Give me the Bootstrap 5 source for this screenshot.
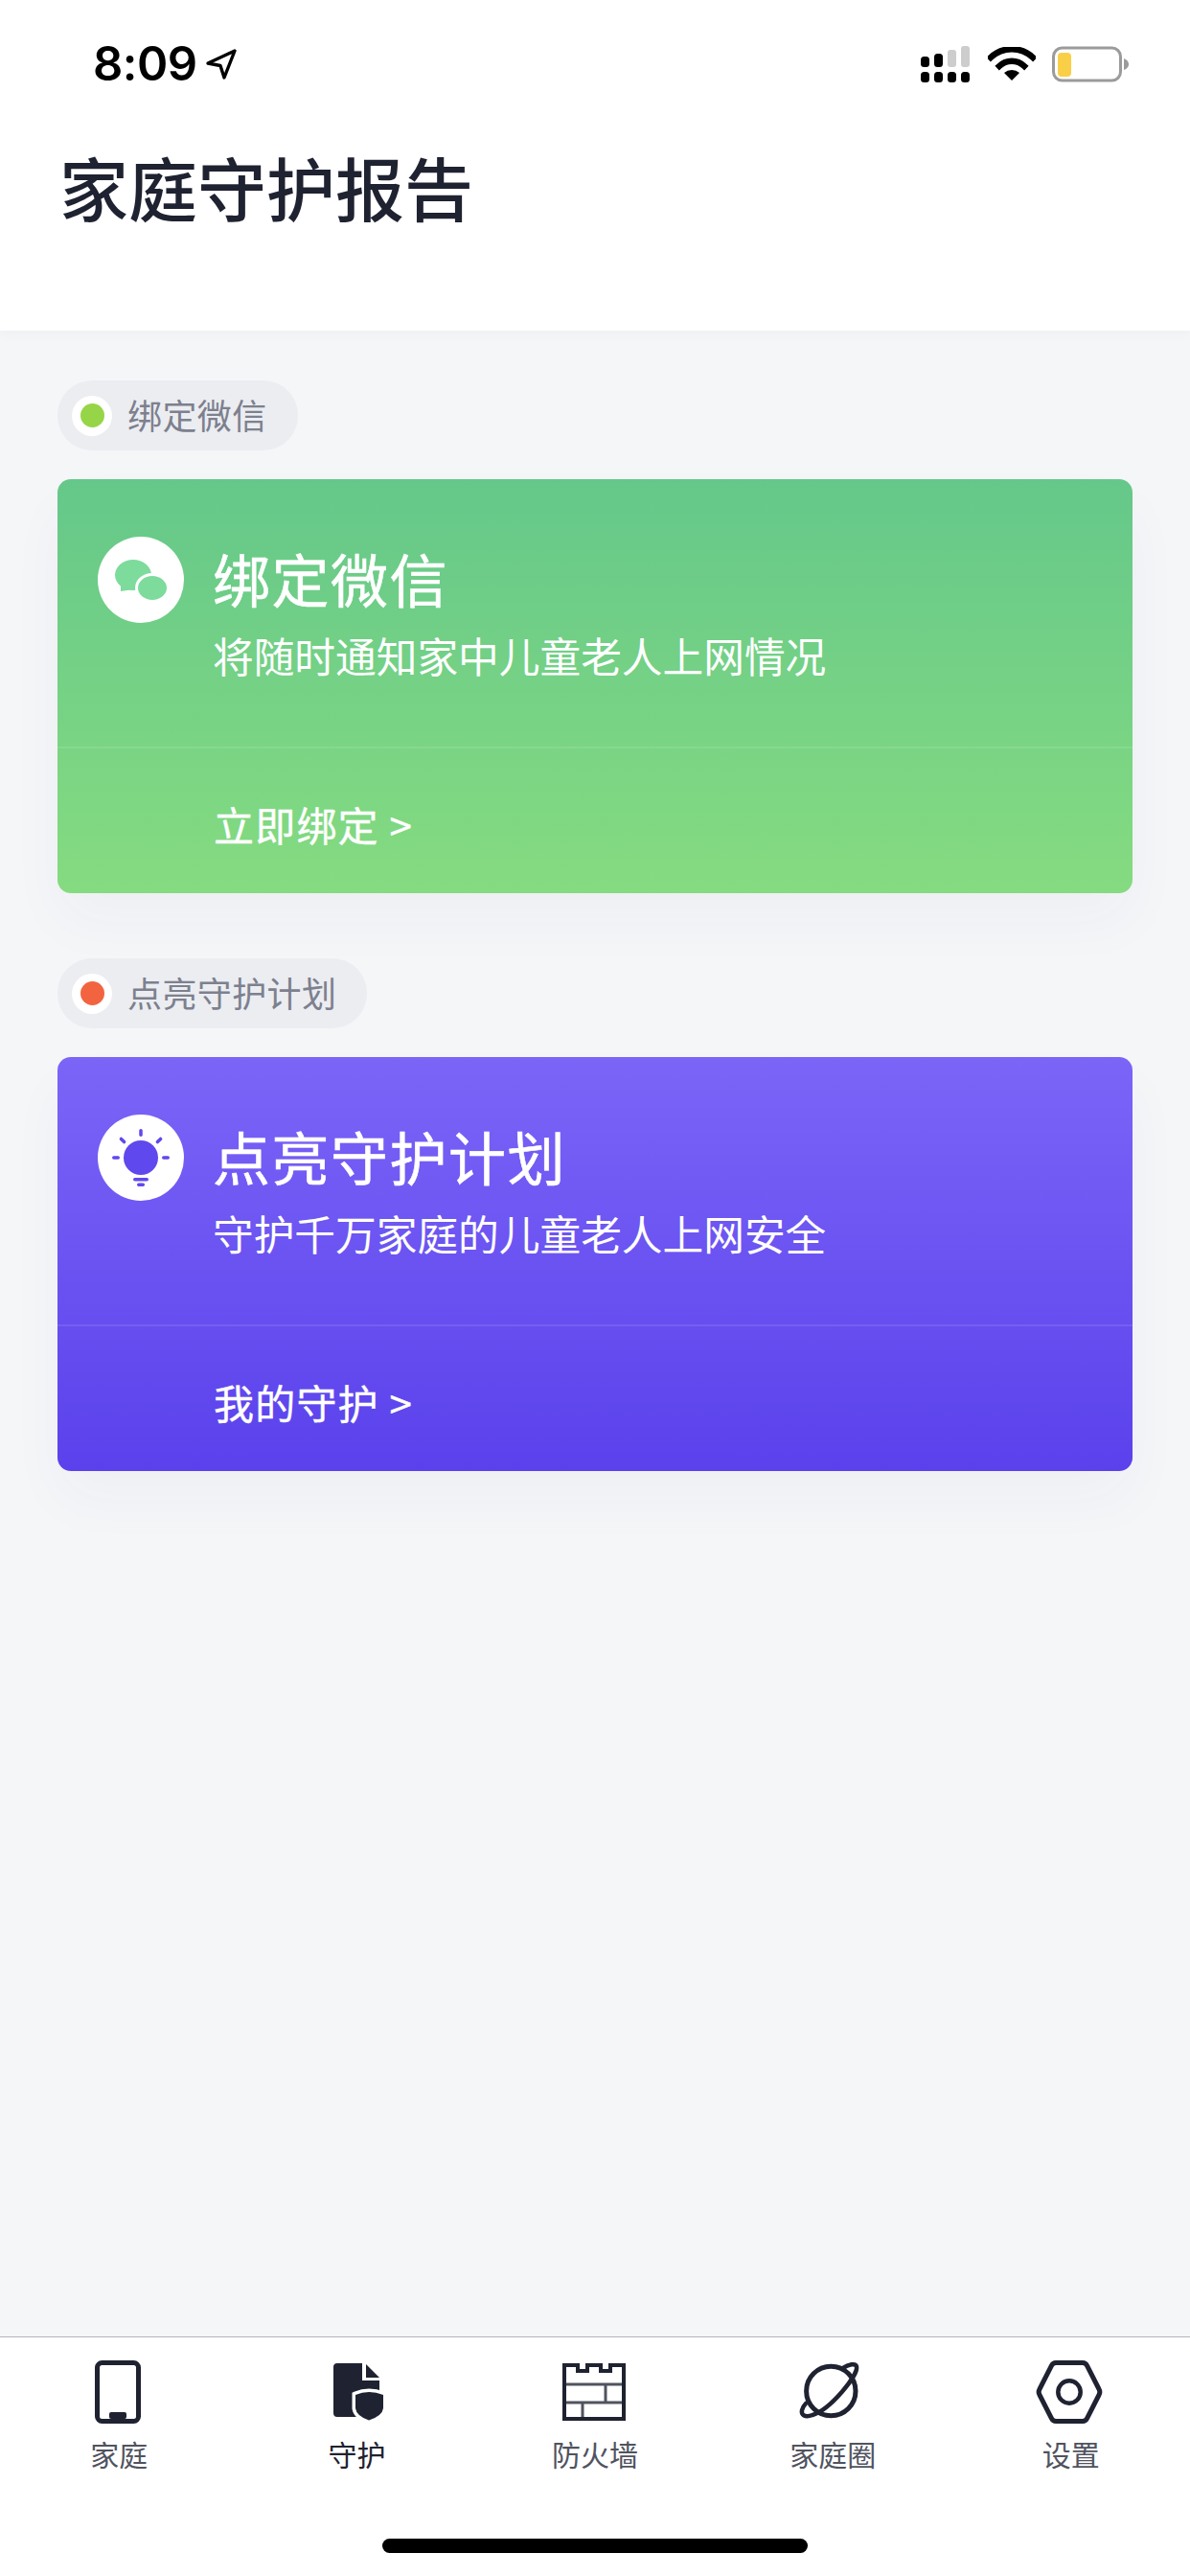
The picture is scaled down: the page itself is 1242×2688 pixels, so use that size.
<!DOCTYPE html>
<html lang="zh">
<head>
    <meta charset="UTF-8">
    <meta name="viewport" content="width=device-width, initial-scale=1.0">
    <title>家庭守护报告</title>
    <link href="https://cdn.jsdelivr.net/npm/bootstrap@5.3.3/dist/css/bootstrap.min.css" rel="stylesheet">
    <style>
        body {
            background: #f5f6f8;
            font-family: "Noto Sans CJK SC", "Liberation Sans", sans-serif;
            width: 1242px;
            height: 2688px;
            overflow: hidden;
        }

        .screen {
            height: 2688px;
        }

        .top-head {
            height: 345px;
            background: #fff;
            box-shadow: 0 2px 14px rgba(40, 45, 70, 0.04);
            padding: 44px 64px 0 97px;
        }

        .status-row {
            height: 46px;
        }

        .status-time {
            font: 600 49px/46px Inter, "Liberation Sans", sans-serif;
            color: #000;
            letter-spacing: -0.5px;
        }

        .wifi-ic {
            margin: 0 17px 0 18px;
        }

        .page-title {
            font-size: 72px;
            font-weight: 500;
            line-height: 100px;
            color: #1f2230;
            margin: 54px 0 0 -35px;
        }

        .report-wrap {
            padding: 52px 60px 0;
        }

        .tag-pill {
            height: 73px;
            padding: 0 32px 0 15px;
            border-radius: 36px;
            background: #ebedf1;
            color: #7d808e;
            font-size: 36px;
            letter-spacing: 0.4px;
            gap: 16px;
        }

        .tag-label {
            margin-top: -3px;
        }

        .tag-ring {
            width: 42px;
            height: 42px;
            border-radius: 50%;
            background: #fff;
        }

        .tag-dot {
            width: 25px;
            height: 25px;
            border-radius: 50%;
        }

        .dot-green {
            background: #96d548;
        }

        .dot-red {
            background: #f2643f;
        }

        .guard-card {
            height: 432px;
            margin: 30px 0 68px;
            border-radius: 14px;
            color: #fff;
            box-shadow: 0 30px 60px rgba(60, 70, 120, 0.035);
        }

        .card-wechat {
            background: linear-gradient(180deg, #65c88a, #85db80);
        }

        .card-plan {
            background: linear-gradient(180deg, #7b65f7, #5a41ec);
        }

        .card-main {
            height: 281px;
            padding: 60px 0 0 42px;
            gap: 30px;
            border-bottom: 2px solid rgba(255, 255, 255, 0.1);
        }

        .round-icon {
            width: 90px;
            height: 90px;
            border-radius: 50%;
            background: #fff;
        }

        .card-title {
            font-size: 60px;
            line-height: 80px;
            font-weight: 400;
            -webkit-text-stroke: 0.6px #fff;
            letter-spacing: 1.5px;
            margin: 3px 0 0;
        }

        .card-sub {
            font-size: 42.7px;
            line-height: 56px;
            margin: 12px 0 0;
        }

        .card-action {
            padding: 49px 0 0 163px;
            font-size: 42px;
            -webkit-text-stroke: 0.4px #fff;
            line-height: 60px;
            letter-spacing: 1.2px;
        }

        .tab-strip {
            height: 250px;
            background: #fff;
            border-top: 1px solid #b4b6ba;
            padding-top: 22px;
        }

        .tab-cell {
            width: 248.4px;
            color: #50535f;
            font-size: 30px;
            line-height: 40px;
        }

        .tab-cell svg {
            display: block;
            margin-bottom: 9px;
        }

        .tab-on {
            color: #1f2230;
        }

        .home-bar {
            position: absolute;
            left: 399px;
            bottom: 24px;
            width: 444px;
            height: 15px;
            border-radius: 8px;
            background: #000;
        }
    </style>
</head>

<body>
    <div class="screen d-flex flex-column position-relative">
        <header class="top-head">
            <div class="status-row d-flex justify-content-between align-items-center">
                <div class="d-flex align-items-center gap-2">
                    <span class="status-time">8:09</span>
                    <svg width="34" height="34" viewBox="0 0 34 34">
                        <path d="M31 3 3 16l13 2.500L20 31z" fill="none" stroke="#000" stroke-width="3.400" stroke-linejoin="round" />
                    </svg>
                </div>
                <div class="d-flex align-items-center">
                    <svg width="52" height="38" viewBox="0 0 52 38">
                        <g fill="#000">
                            <rect x="0" y="11" width="9" height="11" rx="3.500" />
                            <rect x="14" y="8" width="9" height="14" rx="3.500" />
                            <rect x="0" y="27" width="9" height="11" rx="3.500" />
                            <rect x="14" y="27" width="9" height="11" rx="3.500" />
                            <rect x="28" y="27" width="9" height="11" rx="3.500" />
                            <rect x="42" y="27" width="9" height="11" rx="3.500" />
                        </g>
                        <g fill="#cdcdcd">
                            <rect x="28" y="4" width="9" height="18" rx="3" />
                            <rect x="42" y="0" width="9" height="22" rx="3" />
                        </g>
                    </svg>
                    <svg width="50" height="36" viewBox="0 0 50 36" class="wifi-ic">
                        <path d="M3 11a32 32 0 0 1 44 0" fill="none" stroke="#000" stroke-width="6.500" stroke-linecap="square" />
                        <path d="M12 20a19 19 0 0 1 26 0" fill="none" stroke="#000" stroke-width="6.500" stroke-linecap="square" />
                        <path d="M25 35 17 27a12 12 0 0 1 16 0z" fill="#000" />
                    </svg>
                    <svg width="80" height="38" viewBox="0 0 80 38">
                        <rect x="1.500" y="2" width="70" height="34" rx="9" fill="none" stroke="#9b9b9b" stroke-width="3" />
                        <rect x="6" y="7" width="14" height="25" rx="4" fill="#f8cf46" />
                        <path d="M75 13q5 2 5 6t-5 6z" fill="#9b9b9b" />
                    </svg>
                </div>
            </div>
            <h1 class="page-title">家庭守护报告</h1>
        </header>

        <main class="report-wrap flex-grow-1">
            <div class="tag-pill d-inline-flex align-items-center">
                <span class="tag-ring d-flex align-items-center justify-content-center"><span class="tag-dot dot-green"></span></span>
                <span class="tag-label">绑定微信</span>
            </div>
            <div class="guard-card card-wechat">
                <div class="card-main d-flex">
                    <div class="round-icon d-flex align-items-center justify-content-center flex-shrink-0">
                        <svg width="56" height="44" viewBox="0 0 56 44" fill="#7ddb9c">
                            <ellipse cx="20" cy="17" rx="19" ry="16" />
                            <path d="M7 24v10l13-2z" />
                            <path d="M47 34l4 8-11-3z" />
                            <ellipse cx="40" cy="30.500" rx="15" ry="12.500" stroke="#fff" stroke-width="6" paint-order="stroke" />
                        </svg>
                    </div>
                    <div>
                        <h2 class="card-title">绑定微信</h2>
                        <p class="card-sub">将随时通知家中儿童老人上网情况</p>
                    </div>
                </div>
                <div class="card-action">立即绑定 &gt;</div>
            </div>

            <div class="tag-pill d-inline-flex align-items-center">
                <span class="tag-ring d-flex align-items-center justify-content-center"><span class="tag-dot dot-red"></span></span>
                <span class="tag-label">点亮守护计划</span>
            </div>
            <div class="guard-card card-plan">
                <div class="card-main d-flex">
                    <div class="round-icon d-flex align-items-center justify-content-center flex-shrink-0">
                        <svg width="62" height="62" viewBox="0 0 62 62" fill="#5f48ee">
                            <circle cx="31" cy="31" r="18" />
                            <rect x="29.250" y="1" width="3.500" height="8" rx="1.750" />
                            <rect x="1" y="29.250" width="8" height="3.500" rx="1.750" />
                            <rect x="53" y="29.250" width="8" height="3.500" rx="1.750" />
                            <rect x="8" y="11.250" width="8" height="3.500" rx="1.750" transform="rotate(45 12 13)" />
                            <rect x="46" y="11.250" width="8" height="3.500" rx="1.750" transform="rotate(-45 50 13)" />
                            <rect x="23" y="52" width="16" height="3.500" rx="1.750" />
                            <rect x="27" y="57.500" width="8" height="3.500" rx="1.750" />
                        </svg>
                    </div>
                    <div>
                        <h2 class="card-title">点亮守护计划</h2>
                        <p class="card-sub">守护千万家庭的儿童老人上网安全</p>
                    </div>
                </div>
                <div class="card-action">我的守护 &gt;</div>
            </div>
        </main>

        <nav class="tab-strip d-flex">
            <div class="tab-cell d-flex flex-column align-items-center">
                <svg width="80" height="70" viewBox="0 0 80 70">
                    <rect x="17.500" y="4.500" width="43" height="61" rx="5" fill="none" stroke="#1f2230" stroke-width="5" />
                    <rect x="30" y="56" width="18" height="7" rx="2" fill="#1f2230" />
                </svg>
                家庭
            </div>
            <div class="tab-cell tab-on d-flex flex-column align-items-center">
                <svg width="80" height="70" viewBox="0 0 80 70">
                    <path d="M15 9q0-4 4-4H45V23H63V61H19q-4 0-4-4z" fill="#1f2230" />
                    <path d="M49 6 63 20H49z" fill="#1f2230" />
                    <path d="M38 38q14-6 29 0V52q-1 8-15 12.500Q39 60 38 52z" fill="#1f2230" stroke="#fff" stroke-width="7" paint-order="stroke" />
                </svg>
                守护
            </div>
            <div class="tab-cell d-flex flex-column align-items-center">
                <svg width="80" height="70" viewBox="0 0 80 70">
                    <path d="M8 27H70M8 46H70M51 27V46M27 46V62" fill="none" stroke="#50535f" stroke-width="3" />
                    <path d="M8 7H22V13H32V7H46V13H56V7H70V63H8z" fill="none" stroke="#1f2230" stroke-width="4" />
                </svg>
                防火墙
            </div>
            <div class="tab-cell d-flex flex-column align-items-center">
                <svg width="80" height="70" viewBox="0 0 80 70">
                    <circle cx="38.300" cy="34" r="25.700" fill="none" stroke="#1f2230" stroke-width="5" />
                    <path d="M50 10.500C57 6 64 4.500 65 8.500 67 17 38 53 19 59 11 62 7 59 8 54 8.500 52 10 49 12 47" fill="none" stroke="#1f2230" stroke-width="4.500" stroke-linecap="round" />
                </svg>
                家庭圈
            </div>
            <div class="tab-cell d-flex flex-column align-items-center">
                <svg width="80" height="70" viewBox="0 0 80 70">
                    <path d="M24 4.500H52a5 5 0 0 1 4.500 3L69 32a6 6 0 0 1 0 6L56.500 62.500a5 5 0 0 1-4.500 3H24a5 5 0 0 1-4.500-3L7 38a6 6 0 0 1 0-6L19.500 7.500a5 5 0 0 1 4.500-3z" fill="none" stroke="#1f2230" stroke-width="5" />
                    <circle cx="38" cy="35" r="11.700" fill="none" stroke="#1f2230" stroke-width="4.500" />
                </svg>
                设置
            </div>
        </nav>
        <div class="home-bar"></div>
    </div>
    <script src="https://cdn.jsdelivr.net/npm/bootstrap@5.3.3/dist/js/bootstrap.bundle.min.js"></script>
</body>

</html>
